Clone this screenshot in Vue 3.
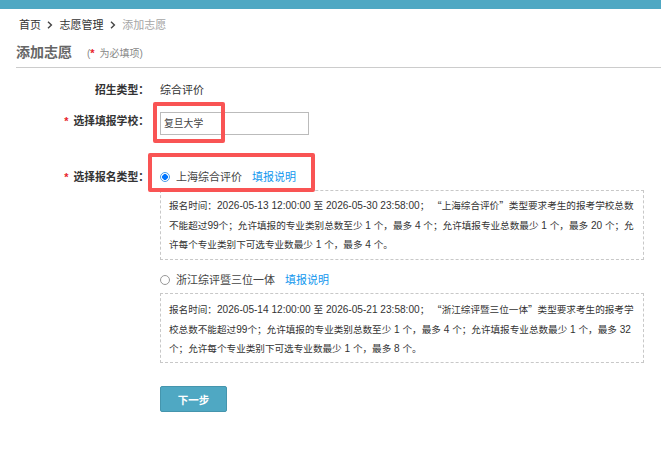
<script setup>
const options = [
  {
    name: '上海综合评价',
    checked: true,
    lines: [
      '报名时间：2026-05-13 12:00:00 至 2026-05-30 23:58:00； “上海综合评价”类型要求考生的报考学校总数',
      '不能超过99个；允许填报的专业类别总数至少 1 个，最多 4 个；允许填报专业总数最少 1 个，最多 20 个；允',
      '许每个专业类别下可选专业数最少 1 个，最多 4 个。'
    ]
  },
  {
    name: '浙江综评暨三位一体',
    checked: false,
    lines: [
      '报名时间：2026-05-14 12:00:00 至 2026-05-21 23:58:00； “浙江综评暨三位一体”类型要求考生的报考学',
      '校总数不能超过99个；允许填报的专业类别总数至少 1 个，最多 4 个；允许填报专业总数最少 1 个，最多 32',
      '个；允许每个专业类别下可选专业数最少 1 个，最多 8 个。'
    ]
  }
]

// digits and curly quotes need their own size / font to get the original widths
function parts(line) {
  return line.split(/(“|”|[0-9:\- ]+)/).filter(Boolean).map((text) => ({
    text,
    cls: /[“”]/.test(text) ? 'quote' : /^[0-9:\- ]+$/.test(text) ? 'num' : ''
  }))
}
</script>

<template>
  <div class="page">
    <div class="topbar"></div>

    <div class="crumbs">
      <span>首页</span>
      <svg class="sep" viewBox="0 0 6 8" width="6" height="8"><path d="M1 .8 4.4 4 1 7.2" fill="none" stroke="#444" stroke-width="1.4" /></svg>
      <span>志愿管理</span>
      <svg class="sep" viewBox="0 0 6 8" width="6" height="8"><path d="M1 .8 4.4 4 1 7.2" fill="none" stroke="#444" stroke-width="1.4" /></svg>
      <span class="crumb-now">添加志愿</span>
    </div>

    <div class="head">
      <h2>添加志愿</h2>
      <span class="note">(<i>*</i> 为必填项)</span>
    </div>

    <div class="form">
      <div class="row row-type">
        <label class="lbl">招生类型：</label>
        <div class="val">综合评价</div>
      </div>

      <div class="row row-school">
        <label class="lbl"><i>*</i>选择填报学校：</label>
        <div class="val">
          <input class="school" value="复旦大学" />
        </div>
      </div>

      <div class="row row-kind">
        <label class="lbl"><i>*</i>选择报名类型：</label>
        <div class="val kinds">
          <div v-for="opt in options" :key="opt.name" class="kind">
            <div class="kind-head">
              <span class="radio" :class="{ on: opt.checked }"></span>
              <span class="kind-name">{{ opt.name }}</span>
              <a class="kind-link">填报说明</a>
            </div>
            <div class="desc">
              <div v-for="line in opt.lines" :key="line" class="desc-line">
                <span v-for="(p, i) in parts(line)" :key="i" :class="p.cls">{{ p.text }}</span>
              </div>
            </div>
          </div>
        </div>
      </div>

      <div class="actions">
        <button class="next">下一步</button>
      </div>
    </div>

    <!-- red marks drawn over the screenshot -->
    <div class="mark mark-school"></div>
    <div class="mark mark-kind"></div>
  </div>
</template>

<style scoped>
.page {
  position: relative;
  width: 661px;
  height: 462px;
  overflow: hidden;
  background: #fff;
  color: #333;
  font-family: "Liberation Sans", "Noto Sans CJK SC", sans-serif;
  font-size: 11px;
}

.topbar {
  height: 9px;
  background: #4fa8c3;
}

.crumbs {
  display: flex;
  align-items: center;
  gap: 6.3px;
  height: 16px;
  margin: 8px 0 0 19px;
  line-height: 16px;
}

.sep { flex-shrink: 0; }
.crumb-now { color: #a5a5a5; }

.head {
  display: flex;
  align-items: baseline;
  height: 22px;
  margin: 9px 0 0 16px;
  padding-bottom: 3px;
  border-bottom: 1px solid #ccc;
}

.head h2 {
  margin: 0;
  font-size: 14px;
  font-weight: 700;
  color: #666;
  line-height: 20px;
}

.note {
  margin-left: 15px;
  font-size: 10px;
  color: #888;
}

i {
  font-style: normal;
  color: #e8212b;
  font-weight: 700;
}

.lbl i { margin-right: 5px; }
.note i { margin-right: 2px; font-size: 11px; }

.form { padding-top: 12px; }

.row { display: flex; }

.lbl {
  width: 149px;
  flex-shrink: 0;
  text-align: right;
  font-weight: 700;
  font-size: 10.8px;
  color: #333;
  line-height: 20px;
}

.val {
  margin-left: 11px;
  line-height: 20px;
}

.row-school { margin-top: 12px; }
.row-school .lbl { line-height: 18px; }

.school {
  display: block;
  box-sizing: border-box;
  width: 149px;
  height: 23px;
  padding: 0 3px 2px;
  border: 1px solid #bbb;
  outline: none;
  font: inherit;
  font-size: 9.8px;
  color: #444;
}

.row-kind { margin-top: 32px; }

.kinds { width: 484px; }

.kind + .kind { margin-top: 10px; }
.kind + .kind .desc { padding-top: 6px; }

.kind-head {
  display: flex;
  align-items: center;
  height: 20px;
}

.radio {
  box-sizing: border-box;
  width: 10px;
  height: 10px;
  margin-right: 6px;
  border: 1px solid #999;
  border-radius: 50%;
  flex-shrink: 0;
}

.radio.on {
  border-color: #4a9eea;
  background: radial-gradient(circle, #0075ff 0 2.6px, #fff 3.1px);
}

.kind-name { color: #444; }

.kind-link {
  margin-left: 10px;
  color: #0f96ee;
}

.desc {
  box-sizing: border-box;
  width: 484px;
  height: 70px;
  margin-top: 3px;
  padding: 5px 0 0 8px;
  border: 1px dashed #c8c8c8;
  font-size: 9.6px;
  line-height: 19.6px;
  color: #333;
  white-space: nowrap;
}

.desc-line { height: 19.6px; }
.num { font-size: 10.1px; white-space: pre; }
.quote { font-family: "Noto Sans CJK SC", sans-serif; }

.actions { margin: 23px 0 0 160px; }

.next {
  display: block;
  width: 67px;
  height: 26px;
  border: 1px solid #4595ad;
  border-radius: 2px;
  background: #4fa8c3;
  color: #fff;
  font: inherit;
  font-size: 10.5px;
  font-weight: 700;
}

.mark {
  position: absolute;
  box-sizing: border-box;
  border: 4px solid #f95454;
  border-radius: 2px;
}

.mark-school { left: 153px; top: 102px; width: 72px; height: 41px; }
.mark-kind { left: 148px; top: 153px; width: 167px; height: 39px; }
</style>
